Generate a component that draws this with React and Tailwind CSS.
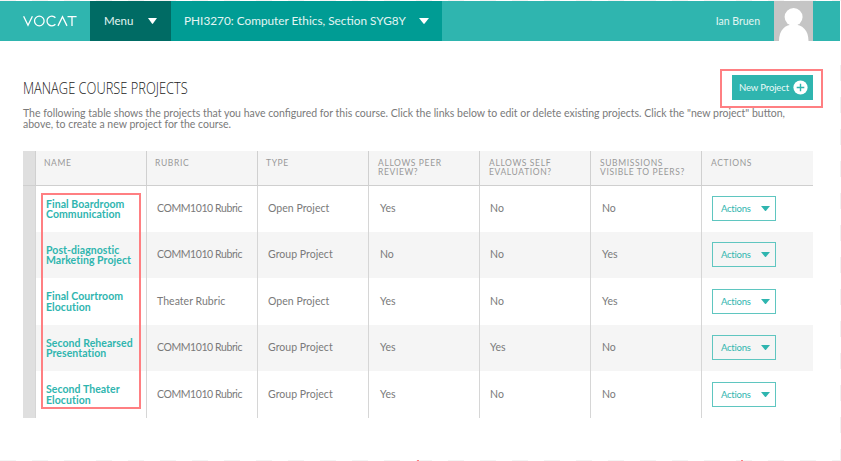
const rows = [
  { name: ["Final Boardroom", "Communication"], rubric: "COMM1010 Rubric", type: "Open Project", peer: "Yes", self: "No", visible: "No", h: "h-[46px]" },
  { name: ["Post-diagnostic", "Marketing Project"], rubric: "COMM1010 Rubric", type: "Group Project", peer: "No", self: "No", visible: "Yes", h: "h-[46px]" },
  { name: ["Final Courtroom", "Elocution"], rubric: "Theater Rubric", type: "Open Project", peer: "Yes", self: "No", visible: "Yes", h: "h-[47px]" },
  { name: ["Second Rehearsed", "Presentation"], rubric: "COMM1010 Rubric", type: "Group Project", peer: "Yes", self: "Yes", visible: "No", h: "h-[46px]" },
  { name: ["Second Theater", "Elocution"], rubric: "COMM1010 Rubric", type: "Group Project", peer: "Yes", self: "No", visible: "No", h: "h-[47px]" },
];

const headings = [
  ["NAME"],
  ["RUBRIC"],
  ["TYPE"],
  ["ALLOWS PEER", "REVIEW?"],
  ["ALLOWS SELF", "EVALUATION?"],
  ["SUBMISSIONS", "VISIBLE TO PEERS?"],
  ["ACTIONS"],
];

const GRID = "grid grid-cols-[12px_111px_111px_111px_111px_111px_111px_112px]";

function Caret({ className }) {
  return (
    <svg viewBox="0 0 10 6" preserveAspectRatio="none" className={className} fill="currentColor">
      <path d="M0 0H10L5.6 5.6Q5 6.2 4.4 5.6Z" />
    </svg>
  );
}

function Logo() {
  return (
    <svg aria-label="VOCAT" className="h-[12px] w-[54px]" viewBox="0 0 54 12" fill="none" stroke="#fff" strokeWidth="1.3">
      <path d="M0.6 1.2 5 10.2 9.4 1.2" />
      <circle cx="16.3" cy="6" r="4.8" />
      <path d="M32.4 2.8A4.8 4.8 0 1 0 32.4 9.2" />
      <path d="M35 10.9 39.5 1.8 44 10.9" />
      <path d="M44.5 1.6H53.6M49 1.6V10.9" />
    </svg>
  );
}

function Cell({ children, className = "pl-[10px] tracking-[0.04px]" }) {
  return (
    <div className={`flex items-center border-l border-[#d6d6d6] text-[10.5px] whitespace-nowrap text-[#7a7a7a] ${className}`}>
      {children}
    </div>
  );
}

export default function App() {
  return (
    <div className="relative h-[461px] w-[841px] overflow-hidden bg-white font-['Lato','Liberation_Sans',sans-serif]">
      <header className="mt-px flex h-10 w-[840px] bg-[#2fb5af] text-white">
        <div className="flex w-[90px] items-center pl-[23px]">
          <Logo />
        </div>
        <div className="flex w-[81px] items-center justify-between bg-[#006b64] pr-[14px] pl-[14px] text-[11.5px] text-[#e3f5f3]">
          <span>Menu</span>
          <Caret className="h-[6px] w-[9px] text-white" />
        </div>
        <div className="flex w-[271px] items-center justify-between bg-[#009c94] pr-[13px] pl-[13px] text-[11.8px]">
          <span className="whitespace-nowrap text-[#e3f5f3]">PHI3270: Computer Ethics, Section SYG8Y</span>
          <Caret className="h-[6px] w-[10px]" />
        </div>
        <div className="flex flex-1 items-center justify-end pt-px pr-[14px] text-[10.5px] text-[#e3f5f3]">Ian Bruen</div>
        <svg className="h-10 w-[39px]" viewBox="0 0 39 40">
          <rect width="39" height="40" fill="#c5c5c5" />
          <circle cx="19.6" cy="16" r="9" fill="#fff" />
          <path d="M5 40C5 29 11 23.5 19.6 23.5S34.5 29 34.5 40Z" fill="#fff" />
        </svg>
        <div className="w-[27px]" />
      </header>

      <main className="pl-[23px]">
        <div className="flex h-[67px] w-[790px] items-end justify-between">
          <h1 className="mb-[9px] w-[166px] origin-left scale-x-[0.83] whitespace-nowrap font-['Open_Sans',sans-serif] text-[15.5px] leading-[22px] font-light text-[#222]">
            MANAGE COURSE PROJECTS
          </h1>
          <button className="mb-[8px] flex h-[25px] w-[81px] items-center justify-between bg-[#2fb5af] pr-[5px] pl-[7px] text-[9.5px] tracking-[-0.12px] text-[#eafaf8]">
            <span className="pt-[2px] whitespace-nowrap">New Project</span>
            <svg className="h-[15px] w-[15px] shrink-0" viewBox="0 0 15 15">
              <circle cx="7.5" cy="7.5" r="7.1" fill="#fff" />
              <path d="M7.5 3.7V11.3M3.7 7.5H11.3" stroke="#2fb5af" strokeWidth="1.4" />
            </svg>
          </button>
        </div>
        <p className="h-[43px] text-[10.5px] leading-[11px] whitespace-nowrap text-[#7a7a7a]">
          The following table shows the projects that you have configured for this course. Click the links below to edit or delete existing projects. Click the "new project" button,
          <br />
          above, to create a new project for the course.
        </p>

        <div className="w-[790px]">
          <div className={`${GRID} h-[35px] border-b border-[#cfcfcf] bg-[#f5f5f5]`}>
            <div className="bg-[#dfdfdf]" />
            {headings.map((lines, i) => (
              <div key={lines[0]} className={`border-l border-[#d0d0d0] pt-[8px] text-[8.5px] leading-[8.5px] tracking-[0.63px] whitespace-nowrap text-[#999] ${i > 2 ? "pl-[9px]" : "pl-[8px]"}`}>
                {lines.map((line) => (
                  <div key={line}>{line}</div>
                ))}
              </div>
            ))}
          </div>
          {rows.map((r, i) => (
            <div key={r.name[0]} className={`${GRID} ${r.h} ${i % 2 ? "bg-[#f5f5f5]" : "bg-white"}`}>
              <div className="bg-[#dfdfdf]" />
              <a className="flex flex-col justify-center border-l border-[#d6d6d6] pl-[10px] text-[10.5px] leading-[10.5px] font-bold tracking-[0.06px] whitespace-nowrap text-[#2fb5af]">
                <span>{r.name[0]}</span>
                <span>{r.name[1]}</span>
              </a>
              <Cell className={r.rubric.startsWith("COMM") ? "pl-[10px] tracking-[-0.42px]" : "pl-[10px] tracking-[0.04px]"}>{r.rubric}</Cell>
              <Cell>{r.type}</Cell>
              <Cell className="pl-[11px]">{r.peer}</Cell>
              <Cell>{r.self}</Cell>
              <Cell className="pl-[11px]">{r.visible}</Cell>
              <Cell className="pb-px pl-[10px]">
                <button className="flex h-[25px] w-[64px] items-center justify-between border border-[#5fc6c0] pr-[5px] pl-[8px] text-[9.5px] tracking-[-0.25px] text-[#2fb5af]">
                  <span className="pt-[2px]">Actions</span>
                  <Caret className="h-[5px] w-[9px]" />
                </button>
              </Cell>
            </div>
          ))}
        </div>
      </main>

      <div className="absolute top-[69px] left-[720px] h-[39px] w-[103px] border-2 border-[#ff7f82]" />
      <div className="absolute top-[193px] left-[41px] h-[216px] w-[100px] border-2 border-[#ff7f82]" />
      <div className="absolute top-0 left-0 h-px w-full bg-[repeating-linear-gradient(to_right,#f4f4f4_0_16px,#fff_16px_32px)]" />
      <div className="absolute top-[65px] right-0 h-[396px] w-px bg-[repeating-linear-gradient(to_bottom,#f2f2f2_0_16px,#fff_16px_32px)]" />
      <div className="absolute bottom-0 left-0 h-px w-full bg-[repeating-linear-gradient(to_right,#f4f4f4_0_16px,#fff_16px_32px)]" />
      <div className="absolute bottom-0 left-[417px] h-px w-[2px] bg-[#ff7f82]" />
      <div className="absolute bottom-0 left-[741px] h-px w-[2px] bg-[#ff7f82]" />
    </div>
  );
}
